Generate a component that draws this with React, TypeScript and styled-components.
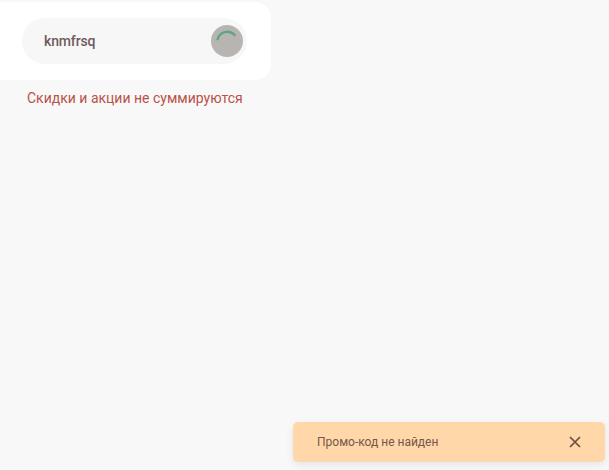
import styled, { createGlobalStyle } from 'styled-components';

const GlobalStyle = createGlobalStyle`
  html, body {
    margin: 0;
    height: 100%;
    background: #f8f8f8;
    font-family: Roboto, "Liberation Sans", sans-serif;
  }
  #root {
    height: 100%;
  }
`;

const Page = styled.div`
  height: 470px;
  width: 609px;
  box-sizing: border-box;
  padding-top: 2px;
  position: relative;
  overflow: hidden;
`;

const Card = styled.div`
  width: 271px;
  height: 78px;
  box-sizing: border-box;
  padding: 16px 24px 0 22px;
  background: #ffffff;
  border-radius: 0 16px 16px 0;
`;

const PromoField = styled.div`
  height: 46px;
  display: flex;
  align-items: center;
  justify-content: space-between;
  box-sizing: border-box;
  padding: 0 4px 0 22px;
  background: #f7f7f7;
  border-radius: 23px;
`;

const PromoValue = styled.span`
  font-size: 14px;
  font-weight: 500;
  letter-spacing: -0.01em;
  color: #715a5e;
`;

const SpinnerButton = styled.div`
  width: 32px;
  height: 32px;
  border-radius: 50%;
  background: #b8b4b1;
  display: flex;
  align-items: center;
  justify-content: center;
`;

const Notice = styled.p`
  margin: 10px 0 0 27px;
  font-size: 14px;
  line-height: 17px;
  color: #b9524a;
`;

const Toast = styled.div`
  position: absolute;
  left: 293px;
  top: 422px;
  width: 312px;
  height: 40px;
  box-sizing: border-box;
  padding: 0 24px 0 24px;
  display: flex;
  align-items: center;
  justify-content: space-between;
  background: #ffd7a8;
  border-radius: 5px;
  box-shadow: 0 3px 8px rgba(0, 0, 0, 0.08);
`;

const ToastText = styled.span`
  font-size: 12px;
  color: #74574a;
`;

const CloseIcon = styled.svg`
  width: 12px;
  height: 12px;
  display: block;
`;

export default function App() {
  return (
    <Page>
      <GlobalStyle />
      <Card>
        <PromoField>
          <PromoValue>knmfrsq</PromoValue>
          <SpinnerButton>
            <svg width="22" height="22" viewBox="0 0 22 22" fill="none">
              <path d="M1.6 9.2A10 10 0 0 1 18.6 5" stroke="#5fa585" strokeWidth="2.4" strokeLinecap="round" />
            </svg>
          </SpinnerButton>
        </PromoField>
      </Card>
      <Notice>Скидки и акции не суммируются</Notice>
      <Toast>
        <ToastText>Промо-код не найден</ToastText>
        <CloseIcon viewBox="0 0 12 12" fill="none">
          <path d="M1 1L11 11M11 1L1 11" stroke="#6b5040" strokeWidth="1.7" />
        </CloseIcon>
      </Toast>
    </Page>
  );
}
